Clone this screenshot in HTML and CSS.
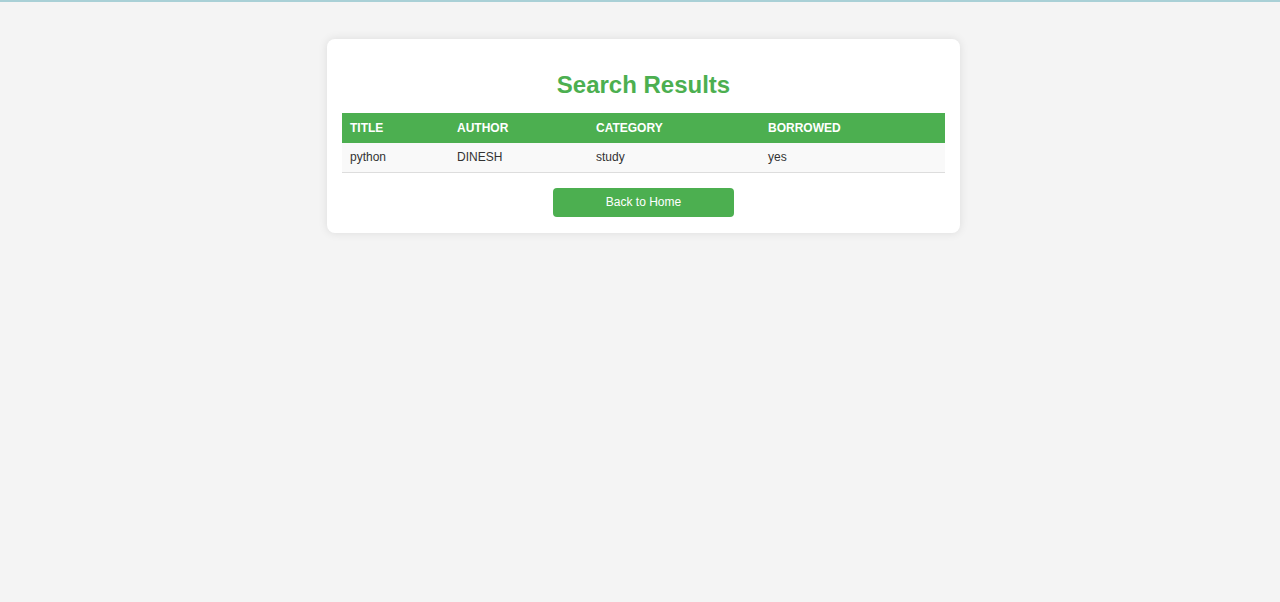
FILE: index.html
```html
<!DOCTYPE html>
<html>
<head>
<meta charset="utf-8">
<link rel="stylesheet" href="styles.css">
</head>
<body>
<div class="page">
  <div class="card">
    <h2 class="title">Search Results</h2>
    <table class="results">
      <thead>
        <tr>
          <th class="c1">Title</th>
          <th class="c2">Author</th>
          <th class="c3">Category</th>
          <th class="c4">Borrowed</th>
        </tr>
      </thead>
      <tbody>
        <tr>
          <td>python</td>
          <td>DINESH</td>
          <td>study</td>
          <td>yes</td>
        </tr>
      </tbody>
    </table>
    <div class="actions">
      <a class="btn" href="#">Back to Home</a>
    </div>
  </div>
</div>
</body>
</html>
```
FILE: styles.css
```css
html, body {
  margin: 0;
  padding: 0;
  background: #f4f4f4;
  font-family: "Liberation Sans", Arial, sans-serif;
  color: #333;
}
.page {
  box-sizing: border-box;
  border-top: 2px solid #a9d0d6;
  height: 602px;
  display: flex;
  justify-content: center;
  align-items: flex-start;
  padding-top: 37px;
  padding-left: 7px;
}
.card {
  width: 603px;
  background: #fff;
  border-radius: 8px;
  box-shadow: 0 0 10px rgba(0,0,0,0.1);
  padding: 15px 15px 16px;
}
.title {
  margin: 17px 0 14px;
  text-align: center;
  color: #4caf50;
  font-size: 24px;
  font-weight: bold;
  line-height: 28px;
}
.results {
  width: 603px;
  border-collapse: collapse;
  font-size: 12px;
}
.results th {
  background: #4caf50;
  color: #fff;
  text-transform: uppercase;
  text-align: left;
  font-weight: bold;
  height: 30px;
  padding: 0 8px;
  box-sizing: border-box;
}
.c1 { width: 107px; }
.c2 { width: 139px; }
.c3 { width: 172px; }
.c4 { width: 185px; }
.results td {
  background: #f9f9f9;
  height: 29px;
  padding: 0 8px;
  border-bottom: 1px solid #ddd;
  box-sizing: border-box;
}
.actions {
  display: flex;
  justify-content: center;
  margin-top: 15px;
}
.btn {
  display: block;
  width: 181px;
  height: 29px;
  line-height: 29px;
  text-align: center;
  background: #4caf50;
  color: #fff;
  text-decoration: none;
  font-size: 12px;
  border-radius: 4px;
}
```
